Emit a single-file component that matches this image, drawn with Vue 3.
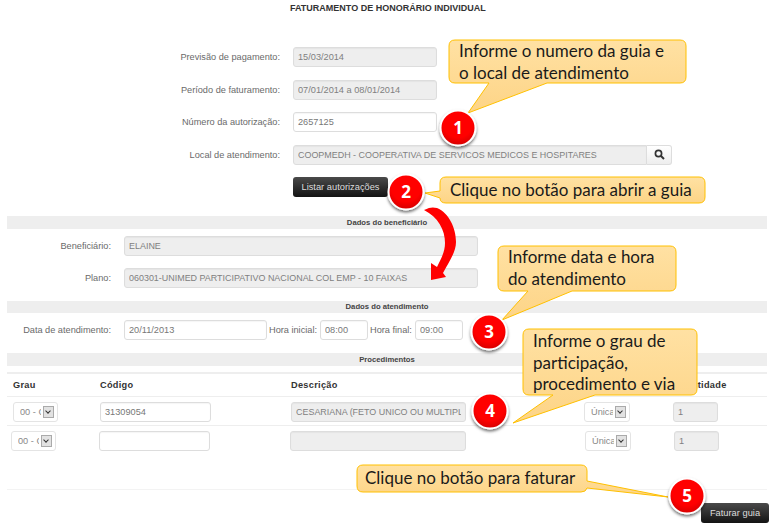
<template>
  <div class="page">
    <h1 class="title">FATURAMENTO DE HONORÁRIO INDIVIDUAL</h1>

    <form class="main-form" @submit.prevent>
      <div class="form-row">
        <label>Previsão de pagamento:</label>
        <input class="field short off" readonly value="15/03/2014" />
      </div>
      <div class="form-row">
        <label>Período de faturamento:</label>
        <input class="field short off" readonly value="07/01/2014 a 08/01/2014" />
      </div>
      <div class="form-row">
        <label>Número da autorização:</label>
        <input class="field short" value="2657125" />
      </div>
      <div class="form-row">
        <label>Local de atendimento:</label>
        <div class="search">
          <input class="field off caps" readonly value="COOPMEDH - COOPERATIVA DE SERVICOS MEDICOS E HOSPITARES" />
          <button class="search-btn" type="button">
            <svg width="11" height="11" viewBox="0 0 11 11">
              <circle cx="4.5" cy="4.5" r="3.1" fill="none" stroke="#333" stroke-width="1.7" />
              <path d="M7 7l3 3" stroke="#333" stroke-width="2" />
            </svg>
          </button>
        </div>
      </div>
      <div class="form-row">
        <span></span>
        <button class="dark-btn" type="button">Listar autorizações</button>
      </div>
    </form>

    <div class="bar first">Dados do beneficiário</div>
    <div class="person">
      <div class="person-row">
        <label>Beneficiário:</label>
        <input class="field off caps" readonly value="ELAINE" />
      </div>
      <div class="person-row">
        <label>Plano:</label>
        <input class="field off caps" readonly value="060301-UNIMED PARTICIPATIVO NACIONAL COL EMP - 10 FAIXAS" />
      </div>
    </div>

    <div class="bar second">Dados do atendimento</div>
    <div class="visit">
      <label class="visit-date">Data de atendimento:</label>
      <input class="field date" value="20/11/2013" />
      <label class="from">Hora inicial:</label>
      <input class="field hour" value="08:00" />
      <label class="to">Hora final:</label>
      <input class="field hour" value="09:00" />
    </div>

    <div class="bar third">Procedimentos</div>
    <div class="proc">
      <div class="proc-head">
        <span>Grau</span>
        <span>Código</span>
        <span>Descrição</span>
        <span></span>
        <span>Quantidade</span>
      </div>
      <div v-for="(row, i) in rows" :key="i" class="proc-row" :class="{ alt: i === 1 }">
        <div class="select-box">
          <select><option>00 - Cirurgião</option></select>
          <i class="arrow"></i>
        </div>
        <input class="field" :value="row.code" />
        <input class="field off caps" readonly :value="row.desc" />
        <div class="select-box">
          <select><option>Única</option></select>
          <i class="arrow"></i>
        </div>
        <input class="field off" readonly value="1" />
      </div>
    </div>

    <div class="actions">
      <button class="dark-btn" type="button">Faturar guia</button>
    </div>

    <svg class="notes" width="774" height="531" viewBox="0 0 774 531">
      <defs>
        <linearGradient id="bubbleFill" x1="0" y1="0" x2="0" y2="1">
          <stop offset="0" stop-color="#ffe1a3" />
          <stop offset="1" stop-color="#fdd486" />
        </linearGradient>
        <radialGradient id="badgeFill" cx="0.5" cy="0.35" r="0.7">
          <stop offset="0.6" stop-color="#ff0000" />
          <stop offset="1" stop-color="#cc0000" />
        </radialGradient>
        <filter id="badgeShadow" x="-30%" y="-30%" width="160%" height="170%">
          <feDropShadow dx="0" dy="2" stdDeviation="1.6" flood-color="#000" flood-opacity="0.55" />
        </filter>
      </defs>

      <path
        class="bend"
        d="M424 210C430 207 433 207 437 208C449 213 456 228 456 242C456 252 449 262 443 273L446 277L431 280L431 263L437 267C442 257 445 251 445 243C445 230 438 217 424 210Z"
      />

      <g v-for="b in bubbles" :key="b.d">
        <path class="bubble" :d="b.d" />
        <text
          v-for="(line, i) in b.lines"
          :key="line"
          class="bubble-text"
          :x="b.x"
          :y="b.y + i * 21.5"
        >{{ line }}</text>
      </g>

      <g v-for="(n, i) in badges" :key="i">
        <circle :cx="n.x" :cy="n.y" r="17.5" fill="url(#badgeFill)" stroke="#fff" stroke-width="2" filter="url(#badgeShadow)" />
        <text class="badge-text" :x="n.x" :y="n.y + 6">{{ i + 1 }}</text>
      </g>
    </svg>
  </div>
</template>

<script setup>
const rows = [
  { code: '31309054', desc: 'CESARIANA (FETO UNICO OU MULTIPLA)' },
  { code: '', desc: '' }
]

const bubbles = [
  {
    d: 'M455 40H680Q686 40 686 46V77Q686 83 680 83H547L468 113L489 83H455Q449 83 449 77V46Q449 40 455 40Z',
    x: 459,
    y: 57,
    lines: ['Informe o numero da guia e', 'o local de atendimento']
  },
  {
    d: 'M446 177H699Q705 177 705 183V197Q705 203 699 203H446Q440 203 440 198L425 193L440 191V183Q440 177 446 177Z',
    x: 450,
    y: 196,
    lines: ['Clique no botão para abrir a guia']
  },
  {
    d: 'M504 246H670Q676 246 676 252V285Q676 291 670 291H572L502 320L528 291H504Q498 291 498 285V252Q498 246 504 246Z',
    x: 508,
    y: 263,
    lines: ['Informe data e hora', 'do atendimento']
  },
  {
    d: 'M529 329H691Q697 329 697 335V389Q697 395 691 395H595L513 423L553 395H529Q523 395 523 389V335Q523 329 529 329Z',
    x: 533,
    y: 347,
    lines: ['Informe o grau de', 'participação,', 'procedimento e via']
  },
  {
    d: 'M363 465H581Q587 465 587 471V481L668 497L587 488Q586 492 581 492H363Q357 492 357 486V471Q357 465 363 465Z',
    x: 365,
    y: 484,
    lines: ['Clique no botão para faturar']
  }
]

const badges = [
  { x: 458, y: 128 },
  { x: 406, y: 192 },
  { x: 489, y: 332 },
  { x: 490, y: 411 },
  { x: 687, y: 496 }
]
</script>

<style>
html,
body {
  margin: 0;
  background: #fff;
}
</style>

<style scoped>
.page {
  position: relative;
  width: 774px;
  height: 531px;
  overflow: hidden;
  background: #fff;
  font-family: "Liberation Sans", Arial, sans-serif;
  font-size: 9.2px;
  color: #6a6a6a;
}

.title {
  margin: 0;
  height: 15px;
  padding: 1px 0 0 290px;
  line-height: 15px;
  font-size: 9px;
  font-weight: bold;
  color: #333;
}

label {
  color: #6a6a6a;
  white-space: nowrap;
}

.field {
  box-sizing: border-box;
  width: 100%;
  height: 20px;
  padding: 0 4px;
  border: 1px solid #ddd;
  border-radius: 3px;
  background: #fff;
  font-family: inherit;
  font-size: 9.2px;
  color: #777;
  outline: none;
  box-shadow: inset 0 1px 1px rgba(0, 0, 0, 0.04);
}

.field.off {
  background: #eee;
  border-color: #ddd;
  color: #808080;
}

.field.caps {
  font-size: 8.95px;
}

.main-form {
  display: grid;
  gap: 12.5px;
  margin-top: 31px;
}

.form-row {
  display: grid;
  grid-template-columns: 280px auto;
  column-gap: 13px;
  justify-content: start;
  align-items: center;
}

.form-row label {
  text-align: right;
}

.field.short {
  width: 144px;
}

.search {
  display: flex;
  width: 379px;
}

.search .field {
  border-radius: 3px 0 0 3px;
}

.search-btn {
  flex: 0 0 25px;
  height: 20px;
  padding: 0;
  border: 1px solid #ddd;
  border-left: 0;
  border-radius: 0 3px 3px 0;
  background: linear-gradient(#fff, #eee);
  display: flex;
  align-items: center;
  justify-content: center;
}

.dark-btn {
  height: 20px;
  padding: 0 8px;
  border: 0;
  border-radius: 3px;
  background: linear-gradient(#4a4a4a, #131313);
  color: #ddd;
  font-family: inherit;
  font-size: 9.3px;
}

.form-row .dark-btn {
  width: 95px;
  padding: 0;
}

.bar {
  margin: 0 7px;
  height: 13px;
  line-height: 13px;
  background: #eee;
  text-align: center;
  font-size: 7.7px;
  font-weight: bold;
  color: #444;
}

.bar.first {
  margin-top: 19px;
}

.bar.second {
  margin-top: 13px;
  height: 12px;
  line-height: 12px;
}

.bar.third {
  margin-top: 13px;
}

.person {
  display: grid;
  gap: 12px;
  margin-top: 7px;
}

.person-row {
  display: grid;
  grid-template-columns: 111px 354px;
  column-gap: 13px;
  align-items: center;
}

.person-row label {
  text-align: right;
}

.visit {
  display: flex;
  align-items: center;
  gap: 2px;
  margin-top: 7px;
}

.visit-date {
  width: 111px;
  margin-right: 11px;
  text-align: right;
}

.from {
  width: 49px;
}

.to {
  width: 43px;
}

.field.date {
  width: 143px;
}

.field.hour {
  width: 48px;
}

.proc {
  margin: 6px 7px 0;
  border-top: 2px solid #eee;
}

.proc-head {
  display: grid;
  grid-template-columns: 87px 191px 293px 89px 60px;
  height: 22px;
  align-items: center;
  padding-left: 6px;
  border-bottom: 1px solid #eee;
  font-weight: bold;
  color: #333;
  letter-spacing: 0.3px;
}

.proc-row {
  display: grid;
  grid-template-columns: 87px 191px 293px 89px 45px;
  align-items: center;
  padding: 5px 0 3px 6px;
  border-bottom: 1px solid #eee;
}

.proc-row > :nth-child(1) {
  width: 45px;
}

.proc-row > :nth-child(2) {
  width: 111px;
}

.proc-row > :nth-child(3) {
  width: 175px;
}

.proc-row > :nth-child(4) {
  width: 46px;
}

.proc-row.alt {
  grid-template-columns: 88px 191px 295px 89px 45px;
  padding: 5px 0 38px 4px;
  border-bottom-color: #f3f3f3;
}

.proc-row.alt > :nth-child(3) {
  width: 176px;
}

.select-box {
  position: relative;
  box-sizing: border-box;
  height: 20px;
  border: 1px solid #e4e4e4;
  border-radius: 3px;
  background: #fff;
}

.select-box select {
  box-sizing: border-box;
  appearance: none;
  width: 100%;
  height: 18px;
  padding: 0 16px 0 6px;
  border: 0;
  outline: none;
  background: transparent;
  font-family: inherit;
  font-size: 9.2px;
  color: #888;
}

.arrow {
  position: absolute;
  right: 3px;
  top: 3px;
  width: 11px;
  height: 12px;
  box-sizing: border-box;
  border: 1px solid #aaa;
  background: #e2e2e2;
}

.arrow::after {
  content: "";
  position: absolute;
  left: 2px;
  top: 2px;
  width: 3px;
  height: 3px;
  border-right: 1.5px solid #333;
  border-bottom: 1.5px solid #333;
  transform: rotate(45deg);
}

.actions {
  display: flex;
  justify-content: flex-end;
  margin: 13px 5px 0 0;
}

.actions .dark-btn {
  width: 68px;
  padding: 0;
}

.notes {
  position: absolute;
  left: 0;
  top: 0;
  pointer-events: none;
}

.bend {
  fill: #ff0000;
}

.bubble {
  fill: url(#bubbleFill);
  stroke: #ffc000;
  stroke-width: 1;
}

.bubble-text {
  font-family: Lato, "Open Sans", sans-serif;
  font-size: 17px;
  fill: #1a1a1a;
}

.badge-text {
  font-family: "Open Sans", sans-serif;
  font-size: 17px;
  font-weight: bold;
  fill: #fff;
  text-anchor: middle;
}
</style>
